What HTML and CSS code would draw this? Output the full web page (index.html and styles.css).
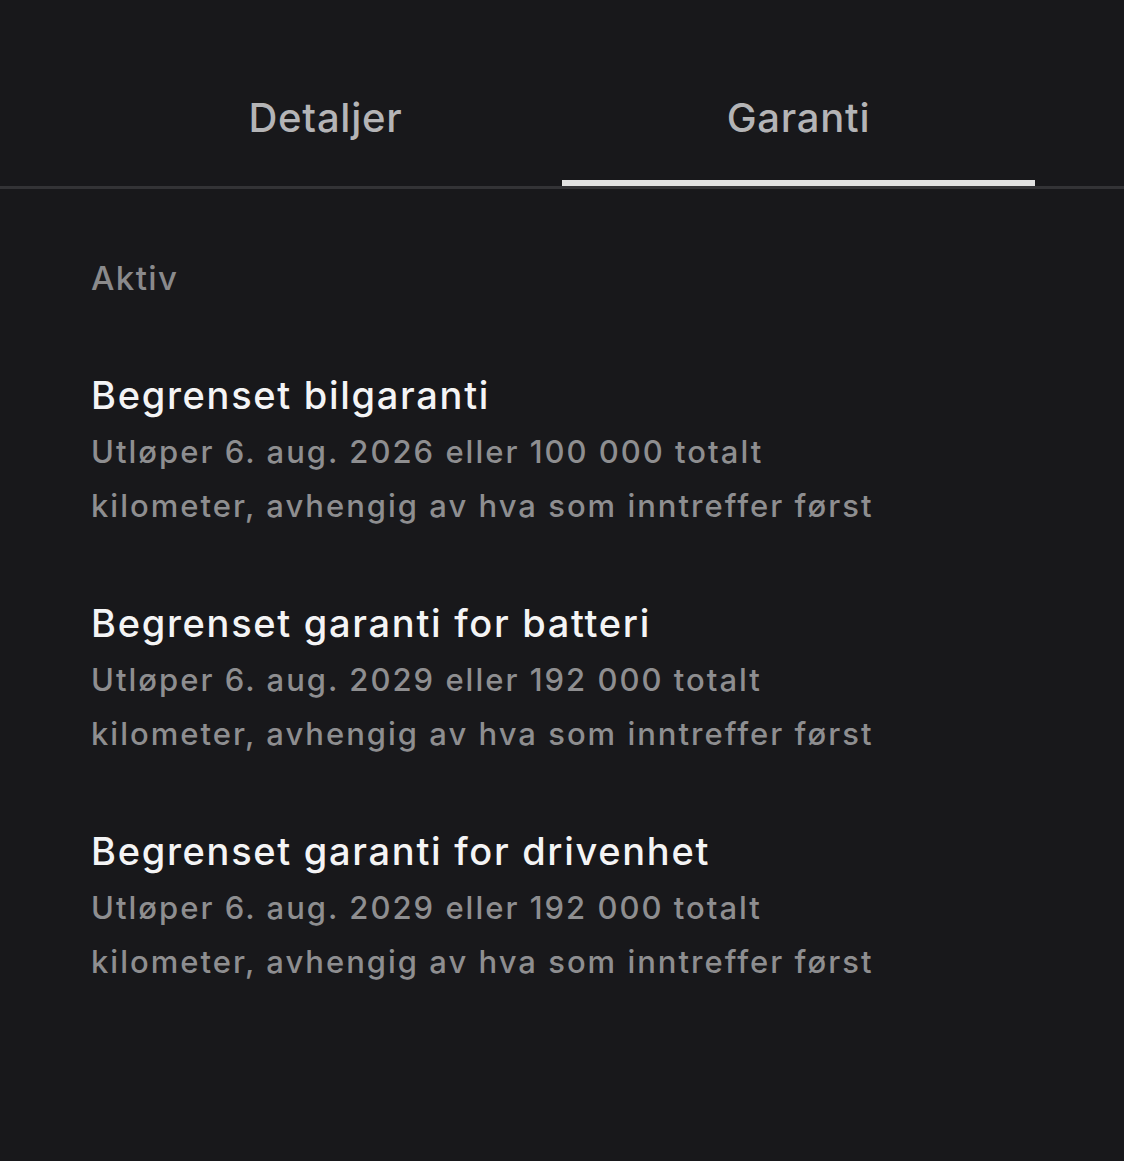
FILE: index.html
```html
<!DOCTYPE html>
<html lang="no">
<head>
<meta charset="utf-8">
<title>Garanti</title>
<link rel="stylesheet" href="styles.css">
</head>
<body>
<div class="tabs">
  <div class="tab">Detaljer</div>
  <div class="tab active">Garanti</div>
</div>
<main class="content">
  <div class="section-label">Aktiv</div>
  <div class="item">
    <div class="item-title">Begrenset bilgaranti</div>
    <div class="item-desc">Utløper 6. aug. 2026 eller 100&nbsp;000 totalt<br>kilometer, avhengig av hva som inntreffer først</div>
  </div>
  <div class="item">
    <div class="item-title">Begrenset garanti for batteri</div>
    <div class="item-desc">Utløper 6. aug. 2029 eller 192&nbsp;000 totalt<br>kilometer, avhengig av hva som inntreffer først</div>
  </div>
  <div class="item">
    <div class="item-title">Begrenset garanti for drivenhet</div>
    <div class="item-desc">Utløper 6. aug. 2029 eller 192&nbsp;000 totalt<br>kilometer, avhengig av hva som inntreffer først</div>
  </div>
</main>
</body>
</html>
```
FILE: styles.css
```css
html, body {
  margin: 0;
  padding: 0;
  background: #18181b;
  height: 100%;
}
body {
  font-family: Inter, "Noto Sans", "Liberation Sans", sans-serif;
  -webkit-font-smoothing: antialiased;
}
.tabs {
  display: flex;
  padding: 0 89px;
  border-bottom: 3px solid #333336;
}
.tab {
  flex: 1;
  height: 186px;
  box-sizing: border-box;
  padding-top: 94px;
  text-align: center;
  font-size: 40px;
  line-height: 48px;
  font-weight: 500;
  letter-spacing: 0.75px;
  color: #b4b4b6;
}
.tab.active {
  box-shadow: inset 0 -6px 0 #e2e2e2;
}
.content {
  padding: 69px 91px 0;
}
.section-label {
  font-size: 33px;
  line-height: 40px;
  font-weight: 500;
  letter-spacing: 1.4px;
  color: #8a8a8c;
  margin-bottom: 73px;
}
.item {
  margin-bottom: 66px;
}
.item-title {
  font-size: 38px;
  line-height: 48px;
  font-weight: 500;
  letter-spacing: 1.7px;
  color: #f4f4f5;
  margin-bottom: 6px;
}
.item-desc {
  font-size: 31px;
  line-height: 54px;
  font-weight: 500;
  letter-spacing: 2px;
  color: #8e8e90;
}
```
